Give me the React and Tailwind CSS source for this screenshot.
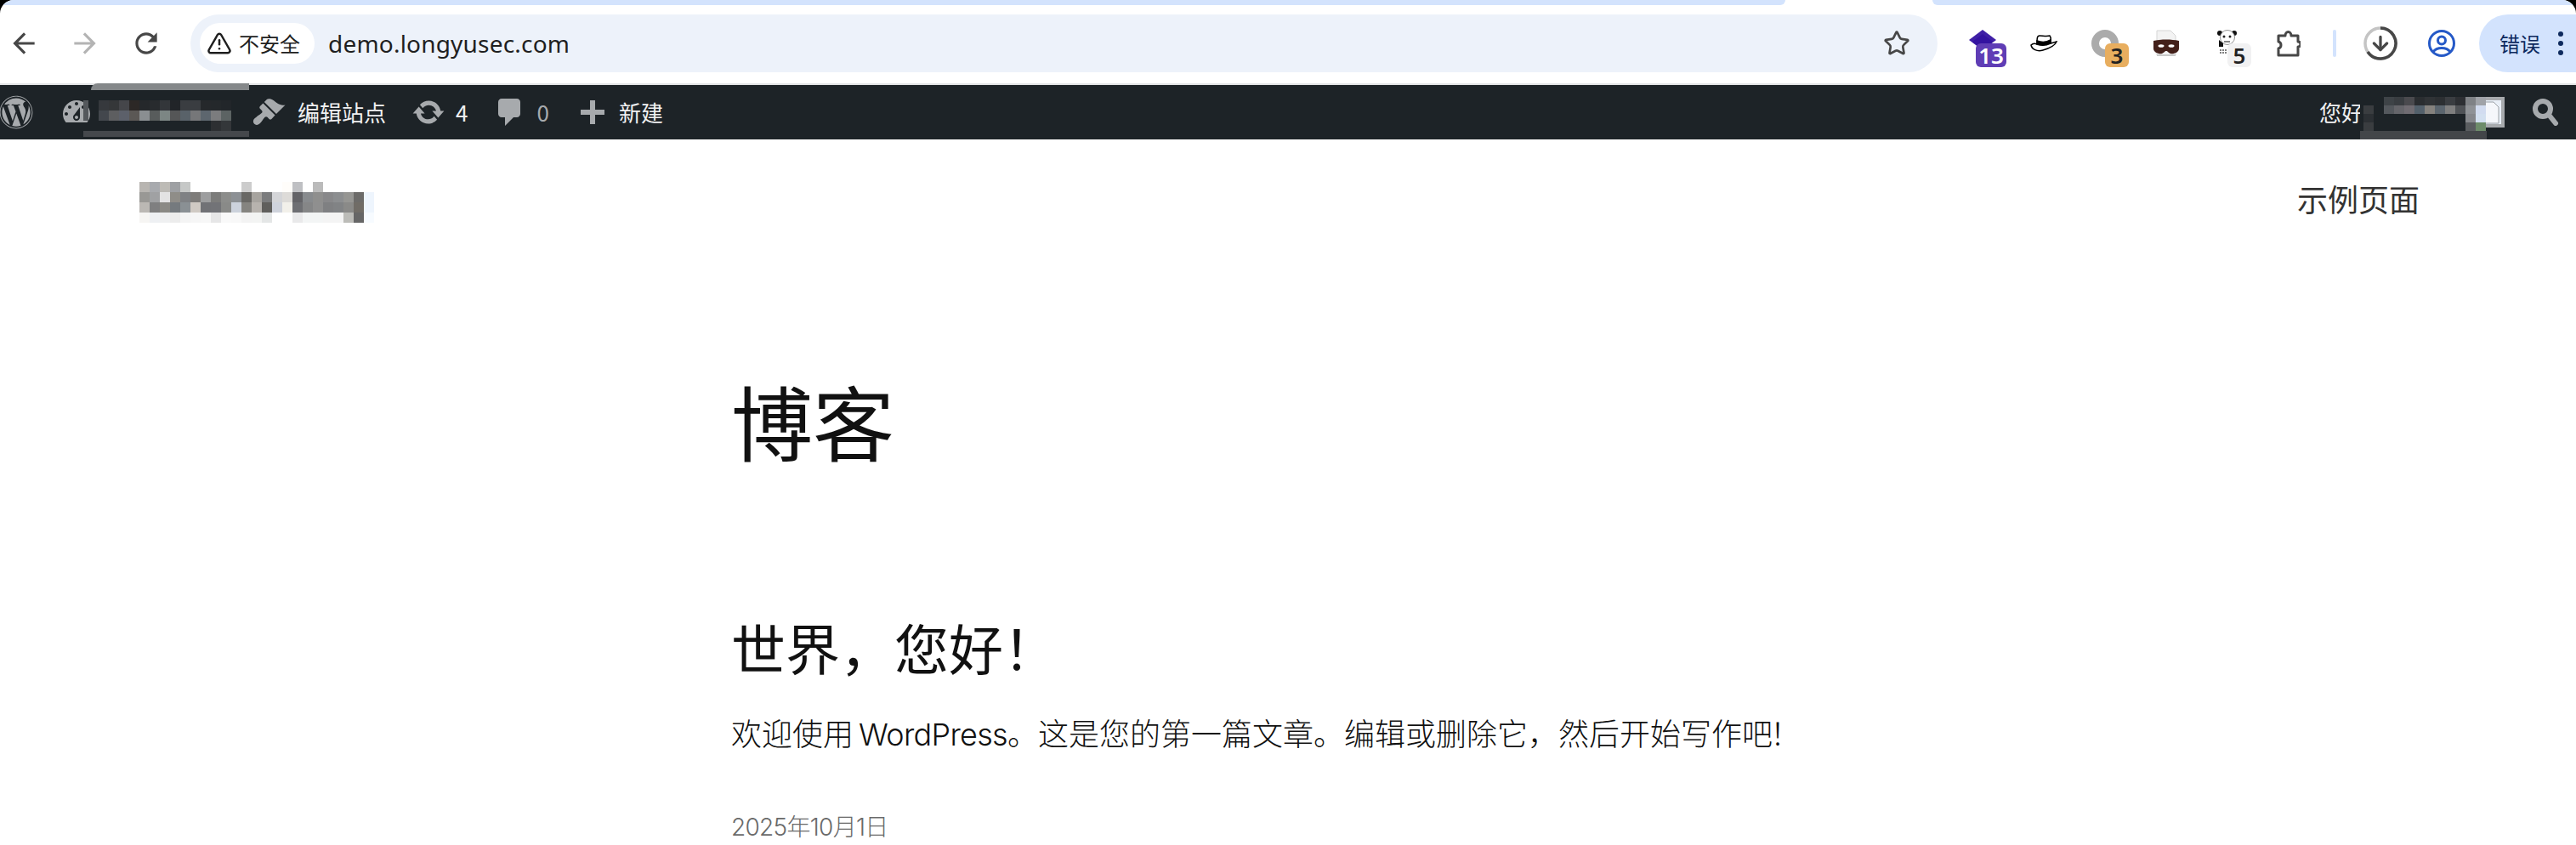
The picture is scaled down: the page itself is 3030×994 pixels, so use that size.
import React from "react";
import { FaWordpress } from "react-icons/fa";
import { Star, TriangleAlert, ArrowDown } from "lucide-react";

const logoRows =
  "bg-[#b8b5b1] bg-[#a8aaae] bg-[#bdbbb6] bg-[#9ea0a3] bg-[#c6c8c7] bg-white bg-white bg-white bg-white bg-white bg-[#cccccc] bg-white bg-white bg-white bg-[#fffdfa] bg-[#bfc0c3] bg-white bg-[#bbbbbb] bg-white bg-white bg-white bg-white bg-white " +
  "bg-[#999895] bg-[#a0a1a3] bg-[#e3e3e3] bg-[#8f8d88] bg-[#7f8184] bg-[#7e7c7a] bg-[#9d9e9f] bg-[#7c7c7b] bg-[#8c8d8b] bg-[#8c9094] bg-[#696865] bg-[#a7a49f] bg-[#7b7c7d] bg-[#d4d5d8] bg-[#dddbd8] bg-[#636367] bg-[#888b8e] bg-[#8f8f8e] bg-[#88888a] bg-[#8c8e90] bg-[#969693] bg-[#6c6b69] bg-[#eef5fd] " +
  "bg-[#bbb8b4] bg-[#7f7f80] bg-[#8b8a85] bg-[#757a7e] bg-[#8a9094] bg-[#d0cac4] bg-[#717276] bg-[#727377] bg-[#898a88] bg-[#ccd2dc] bg-[#858480] bg-[#b7b3ae] bg-[#605f5c] bg-[#cfd3dc] bg-[#f2f0ea] bg-[#6e6f73] bg-[#858687] bg-[#8f8f8f] bg-[#7f8082] bg-[#818385] bg-[#8a8a88] bg-[#706c66] bg-[#eef5fd] " +
  "bg-[#f6f5f3] bg-[#eef0f3] bg-[#eff0f1] bg-[#ececec] bg-[#f4f4f4] bg-[#f6f6f6] bg-[#f7f7f7] bg-[#e6e6e7] bg-[#f9f9f9] bg-[#f8f8f8] bg-[#f3f3f3] bg-[#f3f4f3] bg-[#e4e6e6] bg-white bg-white bg-[#e9e9ea] bg-[#f3f5f5] bg-[#f3f5f5] bg-[#f4f4f4] bg-[#f4f4f4] bg-[#bcbcb8] bg-[#666666] bg-[#f7fbff]";

const barLeftRows =
  "bg-[#36393d] bg-[#353739] bg-[#45464a] bg-[#2c2826] bg-[#25282b] bg-[#282b2e] bg-[#33363a] bg-[#212428] bg-[#3a3d41] bg-[#3a3d41] bg-[#25282b] bg-[#24282b] bg-[#22262a] " +
  "bg-[#43474d] bg-[#5d5e60] bg-[#5c606a] bg-[#5b5855] bg-[#8a8e91] bg-[#585c5c] bg-[#7c8684] bg-[#555657] bg-[#596269] bg-[#767779] bg-[#5d666e] bg-[#7b7c7e] bg-[#5c6363] " +
  "bg-[#1d2327] bg-[#1d2327] bg-[#1d2327] bg-[#1d2327] bg-[#1d2327] bg-[#1d2327] bg-[#1d2327] bg-[#1d2327] bg-[#1d2327] bg-[#1d2327] bg-[#1d2327] bg-[#2d2f32] bg-[#34373a]";

const barRightRows =
  "bg-[#1d2327] bg-[#1d2327] bg-[#3e4347] bg-[#393d41] bg-[#4a4a4e] bg-[#2a2d30] bg-[#303336] bg-[#2c2f32] bg-[#3a3d41] bg-[#2d2f33] bg-[#7f8286] bg-[#a0a3a8] " +
  "bg-[#3a3d40] bg-[#1d2327] bg-[#54585d] bg-[#65656a] bg-[#706c72] bg-[#53606b] bg-[#85827e] bg-[#5b656e] bg-[#7f7f7f] bg-[#4f5256] bg-[#8f9296] bg-[#d2dcf0] " +
  "bg-[#2c3034] bg-[#1d2327] bg-[#1d2327] bg-[#1d2327] bg-[#1d2327] bg-[#1d2327] bg-[#1d2327] bg-[#1d2327] bg-[#1d2327] bg-[#1d2327] bg-[#86888c] bg-[#d3e0f0] " +
  "bg-[#3a3d40] bg-[#1d2327] bg-[#1d2327] bg-[#1d2327] bg-[#1d2327] bg-[#1d2327] bg-[#1d2327] bg-[#1d2327] bg-[#1d2327] bg-[#1d2327] bg-[#5a5d60] bg-[#6d8c6a]";

function Mosaic({ cells, gridClass, cellClass }) {
  return (
    <div className={gridClass}>
      {cells.split(" ").map((c, i) => (
        <div key={i} className={`${cellClass} ${c}`} />
      ))}
    </div>
  );
}

function Dash({ d, className }) {
  return (
    <svg viewBox="0 0 20 20" className={className} fill="currentColor">
      <path d={d} />
    </svg>
  );
}

function Mat({ d, className }) {
  return (
    <svg viewBox="0 0 24 24" className={className} fill="currentColor">
      <path d={d} />
    </svg>
  );
}

function Badge({ children, className }) {
  return (
    <div className={`absolute top-[28px] h-[28px] rounded-[6px] flex items-center justify-center text-[26px] font-semibold leading-none font-['Noto_Sans',sans-serif] ${className}`}>
      {children}
    </div>
  );
}

function Ext({ children }) {
  return <div className="relative w-[56px] h-[56px] flex items-center justify-center shrink-0">{children}</div>;
}

export default function App() {
  return (
    <div className="w-[3030px] h-[994px] overflow-hidden bg-black font-['Inter','Noto_Sans_CJK_SC',sans-serif]">
      <div className="h-full bg-white rounded-t-[16px] overflow-hidden flex flex-col">
        {/* tab strip */}
        <div className="h-[6px] flex justify-between shrink-0">
          <div className="w-[2100px] bg-[#d3e3fd] rounded-br-[14px]" />
          <div className="w-[757px] bg-[#d3e3fd] rounded-bl-[14px]" />
        </div>
        {/* toolbar */}
        <div className="h-[94px] shrink-0 flex items-center pb-[2px] border-b-2 border-[#e4e5e6] font-['Noto_Sans_CJK_SC',sans-serif]">
          <div className="w-[56px] flex justify-center text-[#474747]">
            <Mat className="w-[38px] h-[38px]" d="M20 11H7.83l5.59-5.59L12 4l-8 8 8 8 1.41-1.41L7.83 13H20v-2z" />
          </div>
          <div className="w-[56px] ml-[16px] flex justify-center text-[#b4b4b4]">
            <Mat className="w-[38px] h-[38px]" d="M4 11h12.17l-5.59-5.59L12 4l8 8-8 8-1.41-1.41L16.17 13H4v-2z" />
          </div>
          <div className="w-[56px] ml-[16px] flex justify-center text-[#474747]">
            <Mat className="w-[38px] h-[38px]" d="M17.65 6.35C16.2 4.9 14.21 4 12 4c-4.42 0-7.99 3.58-7.99 8s3.57 8 7.99 8c3.73 0 6.84-2.55 7.73-6h-2.08c-.82 2.33-3.04 4-5.65 4-3.31 0-6-2.69-6-6s2.69-6 6-6c1.66 0 3.14.69 4.22 1.78L13 11h7V4l-2.35 2.35z" />
          </div>
          <div className="ml-[24px] w-[2055px] h-[68px] rounded-full bg-[#edf2fa] flex items-center pl-[11px] pr-[32px]">
            <div className="h-[48px] w-[135px] rounded-full bg-white flex items-center pl-[8px] gap-[8px] text-[#1f1f1f]">
              <TriangleAlert size={30} strokeWidth={2} />
              <span className="text-[24px] leading-none whitespace-nowrap">不安全</span>
            </div>
            <span className="ml-[16px] text-[28px] leading-none text-[#1f1f1f] tracking-[0.2px] font-['Noto_Sans',sans-serif]">demo.longyusec.com</span>
            <Star size={32} strokeWidth={2} className="ml-auto text-[#474747]" />
          </div>
          <div className="ml-[25px] flex gap-[16px]">
            <Ext>
              <svg viewBox="0 0 32 24" className="absolute left-[12px] top-[12px] w-[32px] h-[24px]">
                <path d="M16 0 L32 12 L16 24 L0 12Z" fill="#3f1fa6" />
                <path d="M4 14 L16 5 L28 14 L16 24Z" fill="#3413a0" />
              </svg>
              <Badge className="left-[20px] w-[36px] bg-[#5f3db5] text-white">13</Badge>
            </Ext>
            <Ext>
              <svg viewBox="0 0 32 20" className="w-[32px] h-[20px]" fill="none" stroke="#000" strokeWidth="1.5">
                <path d="M8 11 C8 4 8 1 11 1 C15 1 19 2 23 1 C25 3 24 7 24 10 C28 9 31 8 31 8 C29 13 22 16 15 18 C8 20 2 17 1 12 C3 10 6 10 8 11Z" fill="#fff" />
                <path d="M8 7 C13 9 19 9 24 6 L24 10 C18 13 13 13 8 11Z" fill="#000" />
              </svg>
            </Ext>
            <Ext>
              <div className="absolute left-[12px] top-[12px] w-[32px] h-[32px] rounded-full border-[9px] border-[#ababab]" />
              <Badge className="left-[28px] w-[28px] bg-[#e8ae5f] text-[#222]">3</Badge>
            </Ext>
            <Ext>
              <svg viewBox="0 0 32 32" className="w-[32px] h-[32px]">
                <path d="M5 1 H21 L27 7 V30 H5Z" fill="#f3f3f3" stroke="#d5d5d5" />
                <path d="M5 29 H27 V31 H5Z" fill="#c9c9c9" />
                <path d="M1 13 C10 11 22 11 31 13 V22 C31 27 24 29 21 28 C18 27 18 25 16 25 C14 25 14 27 11 28 C8 29 1 27 1 22Z" fill="#43201a" />
                <ellipse cx="10" cy="19" rx="3.5" ry="1.8" fill="#fff" />
                <ellipse cx="22" cy="19" rx="3.5" ry="1.8" fill="#fff" />
              </svg>
            </Ext>
            <Ext>
              <svg viewBox="0 0 24 28" className="absolute left-[16px] top-[12px] w-[24px] h-[28px]">
                <circle cx="3" cy="4" r="3" fill="#111" />
                <circle cx="20" cy="4" r="3" fill="#111" />
                <circle cx="12" cy="9" r="8.5" fill="#fff" stroke="#777" strokeWidth="0.8" />
                <circle cx="8" cy="8" r="1.5" fill="#222" />
                <circle cx="15" cy="8" r="1.5" fill="#222" />
                <path d="M8 14 H15" stroke="#333" strokeWidth="1.2" />
                <path d="M2 12 V20 H7 V16Z" fill="#111" />
                <path d="M3 24 H12 M3 27 H12" stroke="#555" strokeWidth="1.5" strokeDasharray="2 1" />
              </svg>
              <Badge className="left-[28px] w-[28px] bg-[#f1f1f2] text-[#222]">5</Badge>
            </Ext>
            <Ext>
              <svg viewBox="0 0 28 32" className="w-[28px] h-[32px]" fill="none" stroke="#474747" strokeWidth="3" strokeLinejoin="round">
                <path d="M2 7 H10 C10 1 17 1 17 7 H25 V14 C29 14 29 20 25 20 V30 H2 V22 C6 21 6 15 2 14Z" />
              </svg>
            </Ext>
          </div>
          <div className="ml-[24px] w-[4px] h-[32px] rounded-full bg-[#d3e3fd] shrink-0" />
          <div className="ml-[24px] relative w-[56px] h-[56px] flex items-center justify-center shrink-0">
            <svg viewBox="0 0 40 40" className="w-[40px] h-[40px]" fill="none" strokeWidth="3.5">
              <circle cx="20" cy="20" r="18" stroke="#c4c4c4" />
              <path d="M20 2 A18 18 0 1 1 5 30" stroke="#474747" />
            </svg>
            <ArrowDown size={26} strokeWidth={3} className="absolute text-[#474747]" />
          </div>
          <div className="ml-[16px] w-[56px] flex justify-center shrink-0">
            <svg viewBox="0 0 32 32" className="w-[32px] h-[32px]" fill="none" stroke="#2559c7" strokeWidth="3">
              <circle cx="16" cy="16" r="14.5" />
              <circle cx="16" cy="12.5" r="4.5" />
              <path d="M6 26 C10 20 22 20 26 26" />
            </svg>
          </div>
          <div className="ml-[16px] w-[114px] h-[68px] shrink-0 rounded-l-full bg-[#d3e3fd] flex items-center pl-[24px] text-[#0e2a5e]">
            <span className="text-[24px] leading-none whitespace-nowrap">错误</span>
            <svg viewBox="0 0 6 28" className="ml-[21px] w-[6px] h-[28px]" fill="#0e2a5e">
              <circle cx="3" cy="3" r="3" /><circle cx="3" cy="14" r="3" /><circle cx="3" cy="25" r="3" />
            </svg>
          </div>
        </div>
        {/* admin bar */}
        <div className="relative h-[64px] shrink-0 bg-[#1d2327] flex items-center text-[#f0f0f1] text-[26px] font-['Noto_Sans_CJK_SC',sans-serif] leading-none">
          <FaWordpress className="w-[40px] h-[40px] text-[#a7aaad] -ml-[1px] shrink-0" />
          <Dash className="ml-[31px] w-[40px] h-[40px] text-[#a7aaad] shrink-0" d="M3.76 16h12.48c1.1-1.37 1.76-3.11 1.76-5 0-4.42-3.58-8-8-8s-8 3.58-8 8c0 1.89.66 3.63 1.76 5zM10 4c.55 0 1 .45 1 1s-.45 1-1 1-1-.45-1-1 .45-1 1-1zM6 6c.55 0 1 .45 1 1s-.45 1-1 1-1-.45-1-1 .45-1 1-1zm8 0c.55 0 1 .45 1 1s-.45 1-1 1-1-.45-1-1 .45-1 1-1zm-5.37 5.55L12 7v6c0 1.1-.9 2-2 2s-2-.9-2-2c0-.57.24-1.08.63-1.45zM4 10c.55 0 1 .45 1 1s-.45 1-1 1-1-.45-1-1 .45-1 1-1zm12 0c.55 0 1 .45 1 1s-.45 1-1 1-1-.45-1-1 .45-1 1-1zm-5 3c0-.55-.45-1-1-1s-1 .45-1 1 .45 1 1 1 1-.45 1-1z" />
          <Dash className="ml-[186px] w-[40px] h-[40px] text-[#a7aaad] shrink-0" d="M14.48 11.06L7.41 3.99l1.5-1.5c.5-.56 2.3-.47 3.51.32 1.21.8 1.43 1.28 2.91 2.1 1.18.64 2.45 1.26 4.45.85zm-.71.71L6.7 4.7 4.93 6.47c-.39.39-.39 1.02 0 1.41l1.06 1.06c.39.39.39 1.03 0 1.42-.6.6-1.43 1.11-2.21 1.69-.35.26-.7.53-1.01.84C1.43 13.71.83 14.62.96 15.6c.13.98.95 1.76 1.92 1.86 1-.01 1.9-.6 2.4-1.31.32-.31.58-.66.84-1.01.58-.78 1.09-1.61 1.69-2.21.39-.39 1.03-.39 1.42 0l1.06 1.06c.39.39 1.02.39 1.41 0z" />
          <span className="ml-[14px] whitespace-nowrap">编辑站点</span>
          <Dash className="ml-[30px] w-[40px] h-[40px] text-[#a7aaad] shrink-0" d="M10.2 3.28c3.53 0 6.43 2.61 6.92 6h2.08l-3.5 4-3.5-4h2.32c-.45-1.97-2.21-3.45-4.32-3.45-1.45 0-2.73.71-3.54 1.78L4.95 5.66C6.23 4.2 8.11 3.28 10.2 3.28zm-.4 13.44c-3.52 0-6.43-2.61-6.92-6H.8l3.5-4c1.17 1.33 2.33 2.67 3.5 4H5.48c.45 1.97 2.21 3.45 4.32 3.45 1.45 0 2.73-.71 3.54-1.78l1.71 1.95c-1.28 1.46-3.15 2.38-5.25 2.38z" />
          <span className="ml-[12px]">4</span>
          <Dash className="ml-[30px] w-[40px] h-[40px] text-[#a7aaad] shrink-0" d="M5 2h9c1.1 0 2 .9 2 2v7c0 1.1-.9 2-2 2h-2l-5 5v-5H5c-1.1 0-2-.9-2-2V4c0-1.1.9-2 2-2z" />
          <span className="ml-[11px] text-[#a7aaad]">0</span>
          <Dash className="ml-[31px] w-[40px] h-[40px] text-[#a7aaad] shrink-0" d="M17 8.5v3h-5.5V17h-3v-5.5H3v-3h5.5V3h3v5.5z" />
          <span className="ml-[11px] whitespace-nowrap">新建</span>
          <span className="ml-auto whitespace-nowrap">您好，</span>
          <svg viewBox="0 0 47 36" className="ml-[93px] w-[47px] h-[36px] shrink-0">
            <rect x="0" y="0" width="47" height="36" fill="#a7aaad" />
            <rect x="4" y="4" width="39" height="28" fill="#e9eff7" />
            <path d="M24 6 H34 L40 12 V31 H24Z" fill="#f5f7fb" stroke="#9aa0a6" />
            <path d="M4 24 L15 32 H4Z" fill="#6cab3f" />
          </svg>
          <svg viewBox="0 0 32 32" className="ml-[32px] mr-[20px] w-[32px] h-[32px] shrink-0" fill="none" stroke="#a7aaad">
            <circle cx="13" cy="12" r="9" strokeWidth="6" />
            <path d="M20 19 L28 29" strokeWidth="6" strokeLinecap="round" />
          </svg>

          {/* redaction patches over the bar */}
          <div className="absolute left-[107px] -top-[2px] w-[186px] h-[8px] bg-[#85888a] rounded-tl-[16px]" />
          <div className="absolute left-[98px] top-[18px] w-[6px] h-[24px] bg-[#54585c]" />
          <Mosaic cells={barLeftRows} gridClass="absolute left-[116px] top-[18px] grid grid-cols-[repeat(13,12px)]" cellClass="h-[12px]" />
          <div className="absolute left-[98px] top-[54px] w-[195px] h-[7px] bg-[#45484c]" />
          <div className="absolute left-[2776px] top-[54px] w-[149px] h-[10px] bg-[#434649]" />
          <div className="absolute left-[2776px] top-[14px] w-[124px] h-[40px] bg-[#1d2327]" />
          <Mosaic cells={barRightRows} gridClass="absolute left-[2780px] top-[14px] grid grid-cols-[repeat(12,12px)]" cellClass="h-[10px]" />
        </div>

        {/* site header */}
        <header className="flex justify-between items-start pl-[164px] pr-[184px] pt-[50px] shrink-0">
          <Mosaic cells={logoRows} gridClass="grid grid-cols-[repeat(23,12px)]" cellClass="h-[12px]" />
          <a className="text-[36px] leading-[42px] text-[#333333] whitespace-nowrap mt-[1px]">示例页面</a>
        </header>

        {/* content */}
        <main className="pl-[860px] flex flex-col text-[#111111]">
          <h1 className="mt-[183px] text-[96px] leading-[110px]">博客</h1>
          <h2 className="mt-[172px] text-[64px] leading-[76px]">世界，您好！</h2>
          <p className="mt-[36px] text-[36px] leading-[50px] font-light whitespace-nowrap">欢迎使用<span className="ml-[6px] tracking-[-0.7px]">WordPress</span>。这是您的第一篇文章。编辑或删除它，然后开始写作吧<span className="-ml-[3px]">！</span></p>
          <p className="mt-[66px] text-[28px] leading-[36px] font-light text-[#6a6a6a] whitespace-nowrap tracking-[-0.7px]">2025年10月1日</p>
        </main>
      </div>
    </div>
  );
}
